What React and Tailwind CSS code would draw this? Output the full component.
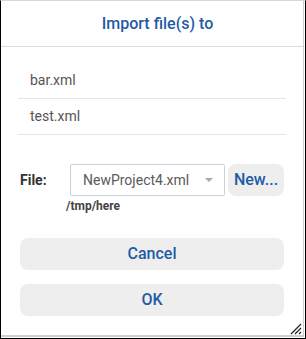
import React from "react";

export default function App() {
  const font = { fontFamily: "Roboto, 'Noto Sans', sans-serif" };
  return (
    <div
      className="relative w-[306px] h-[339px] bg-white border-l border-r border-b border-black border-t border-t-[#d9d9d9] flex"
      style={font}
    >
      <div className="flex-1 flex flex-col mr-px mb-px border-r border-b-2 border-[#cfcfcf]">
        <div className="h-[46px] border-b border-[#dcdcdc] flex items-center justify-center pl-[11px]">
          <span className="text-[16px] font-medium text-[#1f5ba4] leading-none">Import file(s) to</span>
        </div>
        <div className="mx-[17px] mt-[16px] flex flex-col">
          <div className="h-[36px] border-b border-[#e6e6e6] flex items-center pl-[12px] text-[14px] text-[#555]">
            bar.xml
          </div>
          <div className="h-[36px] border-b border-[#e6e6e6] flex items-center pl-[12px] text-[14px] text-[#555]">
            test.xml
          </div>
        </div>
        <div className="mt-[29px] ml-[19px] flex items-center h-[32px]">
          <div className="w-[50px] text-[14px] font-bold text-[#333]">File:</div>
          <div className="w-[155px] h-[32px] border border-[#c9d3de] rounded-[2px] flex items-center pl-[12px] pr-[11px] justify-between">
            <span className="text-[14px] text-[#5a5a5a]">NewProject4.xml</span>
            <svg width="8" height="4" viewBox="0 0 8 4">
              <path d="M0 0 L8 0 L4 4 Z" fill="#aaaaaa" />
            </svg>
          </div>
          <div className="ml-[3px] w-[56px] h-[32px] rounded-lg bg-[#eeeeee] flex items-center justify-center text-[16px] font-medium text-[#1f5ba4]">
            New...
          </div>
        </div>
        <div className="ml-[65px] mt-[3px] text-[12px] leading-[14px] font-bold text-[#444]">/tmp/here</div>
        <div className="mx-[19px] mt-[25px] flex flex-col gap-[14px]">
          <div className="h-[32px] rounded-lg bg-[#eeeeee] flex items-center justify-center text-[16px] font-medium text-[#1f5ba4]">
            Cancel
          </div>
          <div className="h-[32px] rounded-lg bg-[#eeeeee] flex items-center justify-center text-[16px] font-medium text-[#1f5ba4]">
            OK
          </div>
        </div>
      </div>
      <svg className="absolute right-[3px] bottom-[3px]" width="12" height="12" viewBox="0 0 12 12">
        <path d="M11 1 L1 11 M11 5 L5 11 M11 9 L9 11" stroke="#222" strokeWidth="1.2" />
      </svg>
    </div>
  );
}
